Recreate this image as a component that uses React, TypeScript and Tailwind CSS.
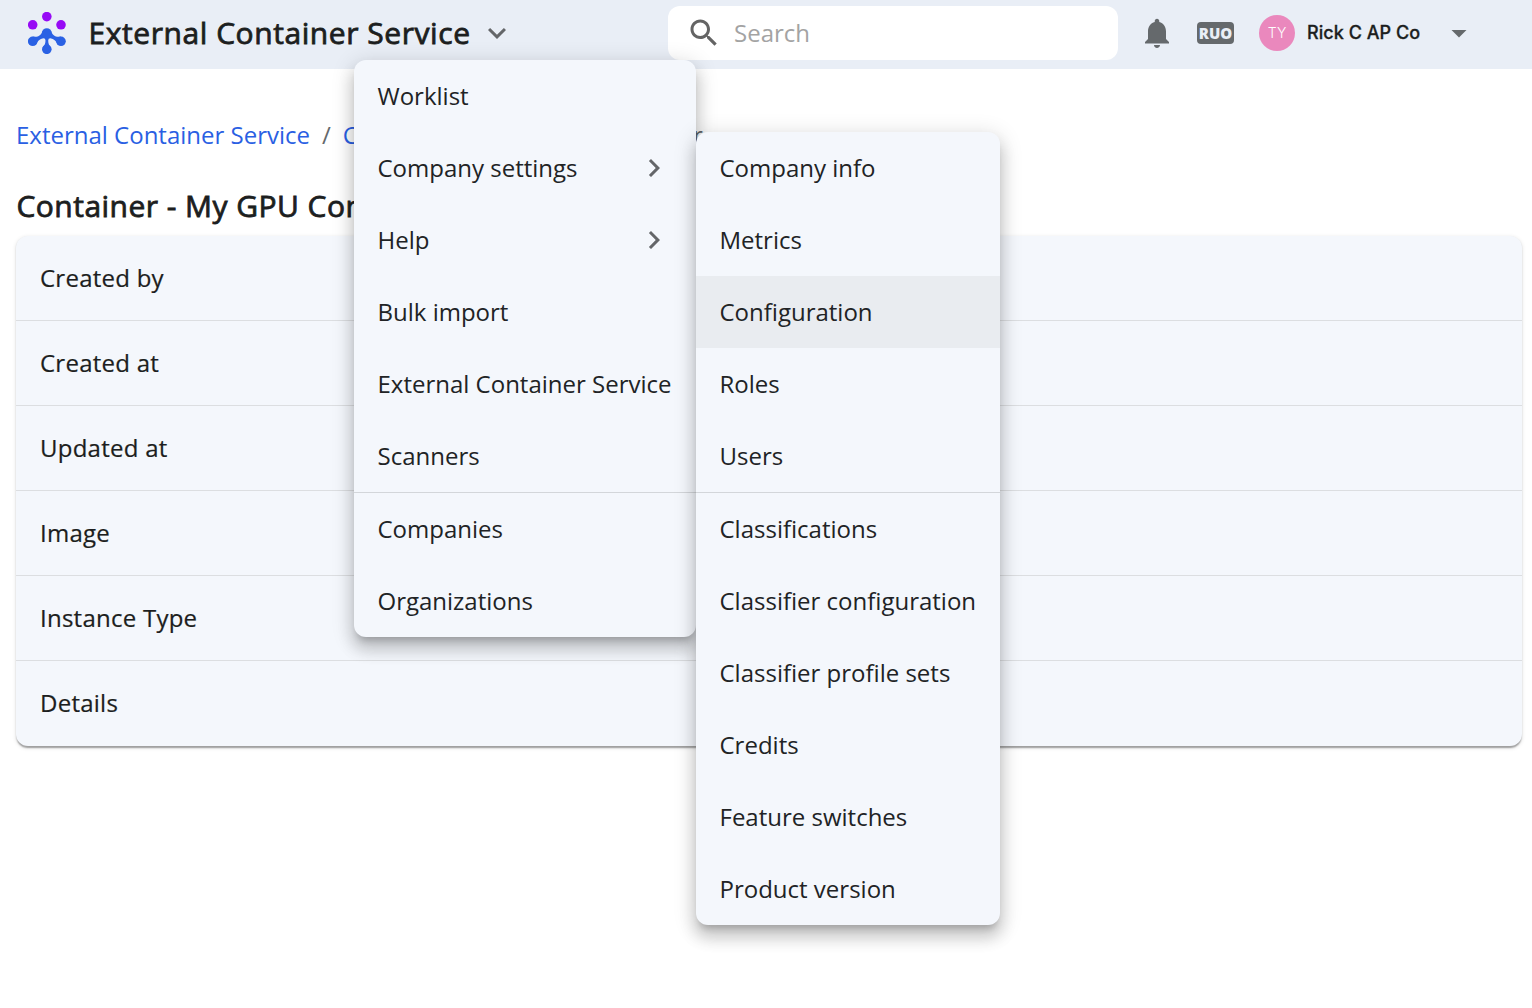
import React from "react";

const mainMenu = [
  { label: "Worklist" },
  { label: "Company settings", sub: true },
  { label: "Help", sub: true },
  { label: "Bulk import" },
  { label: "External Container Service" },
  { label: "Scanners" },
  { label: "Companies", divider: true },
  { label: "Organizations" },
];

const settingsMenu = [
  { label: "Company info" },
  { label: "Metrics" },
  { label: "Configuration", active: true },
  { label: "Roles" },
  { label: "Users" },
  { label: "Classifications", divider: true },
  { label: "Classifier configuration" },
  { label: "Classifier profile sets" },
  { label: "Credits" },
  { label: "Feature switches" },
  { label: "Product version" },
];

const rows = ["Created by", "Created at", "Updated at", "Image", "Instance Type", "Details"];

type Item = { label: string; sub?: boolean; divider?: boolean; active?: boolean };

function Menu({ items, className }: { items: Item[]; className: string }) {
  return (
    <ul
      className={`absolute overflow-hidden rounded-xl bg-[#f4f7fc] text-[#212325] shadow-[0_7.5px_7.5px_-4.5px_rgba(0,0,0,0.2),0_12px_15px_1.5px_rgba(0,0,0,0.14),0_4.5px_21px_3px_rgba(0,0,0,0.12)] ${className}`}
    >
      {items.map((item) => (
        <li
          key={item.label}
          className={`flex items-center justify-between pr-6 pl-[23.5px] whitespace-nowrap ${
            item.divider ? "h-[73px] border-t border-[#d3d6da]" : "h-[72px]"
          } ${item.active ? "bg-[#e9ecf0]" : ""}`}
        >
          <span>{item.label}</span>
          {item.sub && (
            <svg className="h-9 w-9 text-[#646669]" viewBox="0 0 24 24" fill="currentColor">
              <path d="M10 6 8.59 7.41 13.17 12l-4.58 4.59L10 18l6-6z" />
            </svg>
          )}
        </li>
      ))}
    </ul>
  );
}

function Logo() {
  return (
    <svg className="h-[42px] w-[38px]" viewBox="0 0 38 42">
      <g fill="#970af5">
        <circle cx="18.8" cy="4.6" r="4.8" />
        <circle cx="4.7" cy="12.8" r="4.8" />
        <circle cx="33" cy="12.8" r="4.8" />
      </g>
      <g fill="#2a61e4">
        <circle cx="18.8" cy="21" r="4.8" />
        <circle cx="4.7" cy="29.3" r="4.8" />
        <circle cx="33" cy="29.3" r="4.8" />
        <circle cx="18.8" cy="37.3" r="4.8" />
        <path d="M14.500 19C13.200 23.500 9.500 25.700 4.700 24.500L7.500 33.200C9.500 30.500 9.800 27.600 14.500 26.400Q17.500 25.900 17.500 28.500C17.500 31.500 16.500 33.500 14.500 35.500H23.100C21.100 33.500 20.200 31.500 20.200 28.500Q20.200 25.900 23.200 26.400C27.900 27.600 28.200 30.500 30.200 33.200L33 24.500C28.200 25.700 24.400 23.500 23.100 19z" />
      </g>
    </svg>
  );
}

export default function App() {
  return (
    <div className="relative h-[1008px] w-[1532px] overflow-hidden bg-white font-['Open_Sans',sans-serif] text-2xl text-[#1c1e20]">
      <header className="flex h-[69px] bg-[#e9eef6] pl-7">
        <div className="flex h-[66px] w-[640px] items-center">
          <Logo />
          <h1 className="ml-[22.5px] w-[381.5px] text-[30px] tracking-[0.56px] whitespace-nowrap [-webkit-text-stroke:0.8px_#1c1e20]">
            External Container Service
          </h1>
          <svg className="ml-[9px] h-9 w-9 text-[#646669]" viewBox="0 0 24 24" fill="currentColor">
            <path d="M7.41 8.59 12 13.17l4.590-4.580L18 10l-6 6-6-6z" />
          </svg>
        </div>
        <div className="mt-1.5 flex h-[54px] w-[450px] items-center rounded-xl bg-white pl-[18px]">
          <svg className="h-9 w-9 text-[#646464]" viewBox="0 0 24 24" fill="currentColor">
            <path d="M15.500 14h-.79l-.28-.27C15.410 12.590 16 11.110 16 9.500 16 5.910 13.090 3 9.500 3S3 5.910 3 9.500 5.910 16 9.500 16c1.610 0 3.090-.59 4.230-1.570l.27.28v.79l5 4.990L20.490 19zm-6 0C7.010 14 5 11.990 5 9.500S7.010 5 9.500 5 14 7.010 14 9.500 11.990 14 9.500 14" />
          </svg>
          <span className="ml-3 text-[#a3a3a3]">Search</span>
        </div>
        <div className="flex h-[66px] items-center">
          <svg className="ml-[21px] h-9 w-9 text-[#65696c]" viewBox="0 0 24 24" fill="currentColor">
            <path d="M12 22c1.100 0 2-.9 2-2h-4c0 1.100.89 2 2 2m6-6v-5c0-3.070-1.640-5.640-4.500-6.320V4c0-.83-.67-1.500-1.500-1.500s-1.500.67-1.500 1.500v.68C7.630 5.360 6 7.920 6 11v5l-2 2v1h16v-1z" />
          </svg>
          <div className="ml-[22px] flex h-[22px] w-[37px] items-center justify-center rounded bg-[#65696c] text-[15px] font-extrabold text-[#e9eef6]">
            RUO
          </div>
          <div className="ml-[25px] flex h-9 w-9 items-center justify-center rounded-full bg-[#ea88bd] font-['Inter',sans-serif] text-sm font-light text-white">
            TY
          </div>
          <span className="ml-3 w-[113px] font-['Inter',sans-serif] text-lg font-medium whitespace-nowrap tracking-[0.04px] [-webkit-text-stroke:0.3px_#1c1e20]">
            Rick C AP Co
          </span>
          <svg className="ml-[21px] h-9 w-9 text-[#65696c]" viewBox="0 0 24 24" fill="currentColor">
            <path d="m7 10 5 5 5-5z" />
          </svg>
        </div>
      </header>

      <main className="pr-[10px] pl-4">
        <nav className="mt-[48px] flex h-9 items-center whitespace-nowrap">
          <a className="text-[#2a5fe3]">External Container Service</a>
          <span className="mx-3 text-[#65696c]">/</span>
          <a className="w-[260px] text-[#2a5fe3]">Containers</a>
          <span className="flex w-[100px] justify-end text-[#65696c]">Container</span>
        </nav>
        <h2 className="mt-[30px] h-[45px] pl-[0.5px] text-[30px] leading-[45px] tracking-[0.46px] whitespace-nowrap [-webkit-text-stroke:0.8px_#1c1e20]">
          Container - My GPU Container
        </h2>
        <section className="mt-2 overflow-hidden rounded-xl bg-[#f4f7fc] tracking-[0.25px] shadow-[0_3px_1.5px_-1.5px_rgba(0,0,0,0.2),0_1.5px_1.5px_0_rgba(0,0,0,0.14),0_1.5px_4.5px_0_rgba(0,0,0,0.12)] [-webkit-text-stroke:0.2px_#1c1e20]">
          {rows.map((row) => (
            <div key={row} className="flex h-[85px] items-center border-b border-[#dcdee1] px-6 last:border-transparent">
              {row}
            </div>
          ))}
        </section>
      </main>

      <Menu items={mainMenu} className="top-[60px] left-[354px] w-[342px]" />
      <Menu items={settingsMenu} className="top-[132px] left-[696px] w-[304px]" />
    </div>
  );
}
